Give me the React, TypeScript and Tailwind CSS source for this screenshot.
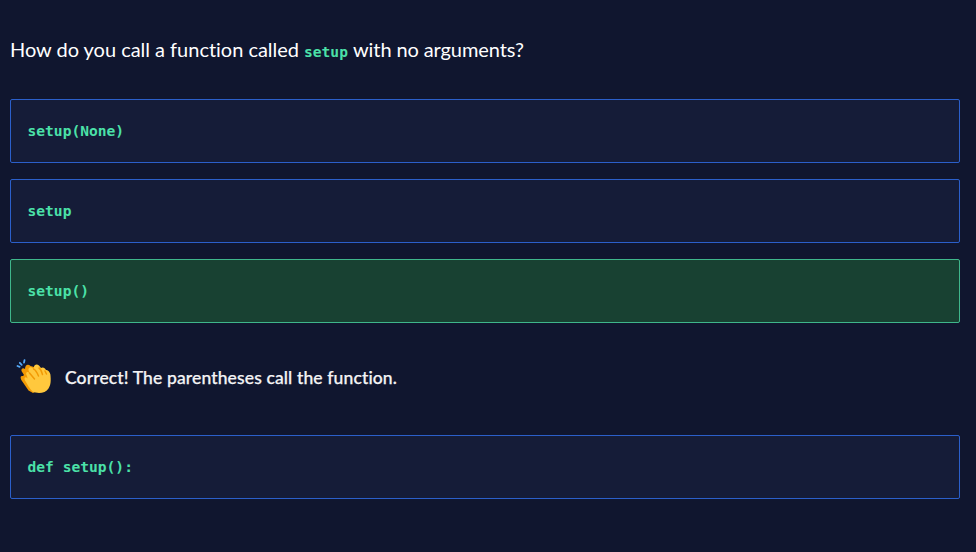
import React from 'react';

const codeFont = "font-['DejaVu_Sans_Mono','Liberation_Mono',monospace] font-bold text-[#4be1a8]";

type AnswerProps = { children: React.ReactNode; correct?: boolean };

function Answer({ children, correct = false }: AnswerProps) {
  const tone = correct ? 'border-[#3fb68b] bg-[#184132]' : 'border-[#2b5fca] bg-[#151c38]';
  return (
    <button className={`flex h-16 w-full items-center rounded-xs border pl-[16.5px] text-left ${tone}`}>
      <code className={`${codeFont} text-[14.6px] leading-5 whitespace-pre`}>{children}</code>
    </button>
  );
}

function ClapIcon() {
  return (
    <svg className="-mt-1 h-9 w-9 shrink-0" viewBox="0 0 36 36" fill="none" aria-hidden="true">
      <path d="M5.3 21C4 18 4.5 16.5 7 17L8 16L5.5 12C5 9.5 7 8.5 9 10C9 6 12 4.5 14.5 7L18 8L24 15L26 29L17 34L12.5 31.5Z" fill="#f29a05" />
      <path d="M11 17C9 13.5 11 11.5 13.5 14L12.5 11C12 8 15.5 7 17.5 10L18 8C18 5.5 21 4.5 23 6.5L25 9C27 7.5 29 9 30 11C32 10.5 34 13 34.4 15.5C35 21 35 26 32.5 29.5C29.5 34.5 21.5 35 16.5 32.5C14 30 11 25 9 21.5C7.5 18.5 9.5 17 11.5 19.5Z" fill="#ffc83d" />
      <path d="M13.5 14L18.5 20M17.5 10C19.5 10.5 21 13.5 22.5 17M23 9C25 10 25.5 12.5 26.5 15.5M29 12L30.5 15" stroke="#f29a05" strokeWidth="1.5" strokeLinecap="round" />
      <path d="M1.5 7L3.7 7.8M3.8 3.8L5.7 5.8M8.5 1.2L8 3.6" stroke="#55a9f7" strokeWidth="1.8" strokeLinecap="round" />
    </svg>
  );
}

export default function App() {
  return (
    <main className="min-h-screen bg-[#10162f] pr-4 pl-[10px] pt-[33px] font-['Lato','Liberation_Sans',sans-serif] [font-variant-ligatures:none]">
      <h1 className="flex h-8 items-center text-xl font-normal whitespace-pre text-white">
        <span className="w-[294px] tracking-[-0.02px]">How do you call a function called</span>
        <code className={`${codeFont} mt-1.5 w-[49px] text-[14.6px]`}>setup</code>
        <span className="tracking-[-0.1px]">with no arguments?</span>
      </h1>
      <section className="mt-[34px] flex flex-col gap-4">
        <Answer>setup(None)</Answer>
        <Answer>setup</Answer>
        <Answer correct>setup()</Answer>
        <div className="my-2 flex h-16 items-center pl-1.5">
          <ClapIcon />
          <p className="-mt-0.5 ml-[13px] text-[17.5px] font-medium tracking-[0.13px] text-[#f4f4f5] [-webkit-text-stroke:0.25px_#f4f4f5]">Correct! The parentheses call the function.</p>
        </div>
        <Answer>def setup():</Answer>
      </section>
    </main>
  );
}
